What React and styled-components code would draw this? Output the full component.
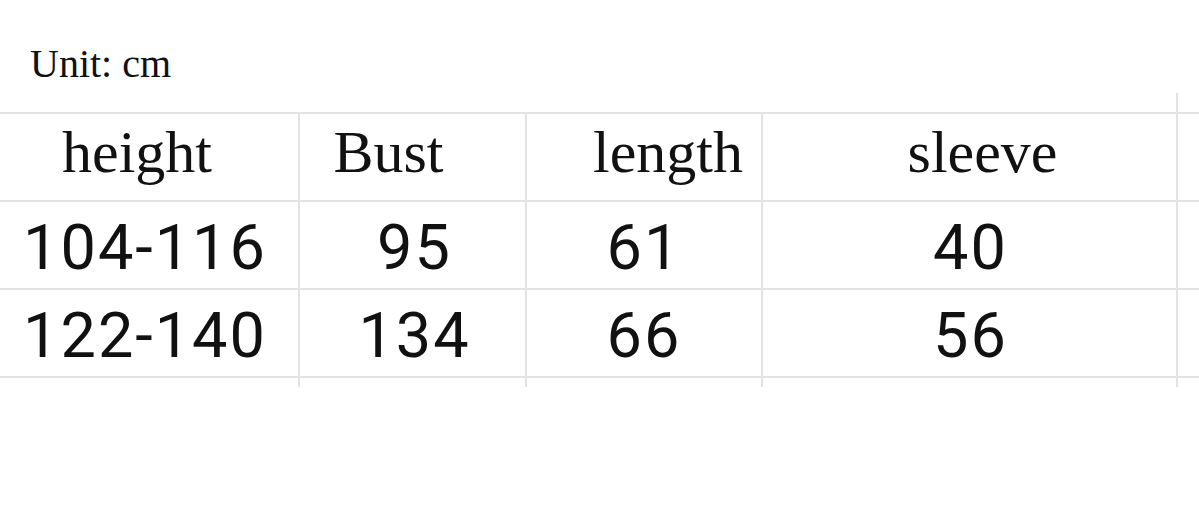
import React from 'react';
import styled, { createGlobalStyle } from 'styled-components';

const GlobalStyle = createGlobalStyle`
  html, body {
    margin: 0;
    padding: 0;
    background: #ffffff;
  }
`;

const LINE = '#e1e3e5';

const Page = styled.div`
  width: 1199px;
  height: 505px;
  overflow: hidden;
  background: #ffffff;
  color: #111111;
`;

const Caption = styled.div`
  box-sizing: border-box;
  height: 93px;
  padding: 41px 0 0 30px;
  font-family: "Liberation Serif", "Times New Roman", serif;
  font-size: 40px;
  line-height: 46px;
`;

const Row = styled.div`
  display: grid;
  grid-template-columns: 300px 227px 236px 415px 1fr;
  ${(p) => p.$top && `border-top: 2px solid ${LINE};`}
`;

const Cell = styled.div`
  box-sizing: content-box;
  height: ${(p) => p.$h || 86}px;
  display: flex;
  align-items: center;
  justify-content: center;
  border-right: ${(p) => (p.$noRight ? 'none' : `2px solid ${LINE}`)};
  border-bottom: ${(p) => (p.$noBottom ? 'none' : `2px solid ${LINE}`)};
  &:last-child {
    border-right: none;
  }
`;

const Head = styled.span`
  font-family: "Liberation Serif", "Times New Roman", serif;
  font-size: 60px;
  line-height: 60px;
  transform: translate(${(p) => p.$dx || 0}px, -5px);
  white-space: nowrap;
`;

const Num = styled.span`
  font-family: Roboto, "Noto Sans", sans-serif;
  font-weight: 400;
  font-size: 63px;
  line-height: 63px;
  letter-spacing: 2px;
  transform: translate(${(p) => p.$dx || 0}px, 2px);
  white-space: nowrap;
`;

const headers = [
  { label: 'height', dx: -12 },
  { label: 'Bust', dx: -24 },
  { label: 'length', dx: 24 },
  { label: 'sleeve', dx: 13 },
];

const rows = [
  ['104-116', '95', '61', '40'],
  ['122-140', '134', '66', '56'],
];

const numShift = [-4, 2, 0, 1];

const App = () => (
  <Page>
    <GlobalStyle />
    <Caption>Unit: cm</Caption>

    <Row>
      <Cell $h={19} $noBottom $noRight />
      <Cell $h={19} $noBottom $noRight />
      <Cell $h={19} $noBottom $noRight />
      <Cell $h={19} $noBottom />
      <Cell $h={19} $noBottom />
    </Row>

    <Row $top>
      {headers.map((h) => (
        <Cell key={h.label}>
          <Head $dx={h.dx}>{h.label}</Head>
        </Cell>
      ))}
      <Cell />
    </Row>

    {rows.map((r) => (
      <Row key={r[0]}>
        {r.map((v, i) => (
          <Cell key={i}>
            <Num $dx={numShift[i]}>{v}</Num>
          </Cell>
        ))}
        <Cell />
      </Row>
    ))}

    <Row>
      <Cell $h={9} $noBottom />
      <Cell $h={9} $noBottom />
      <Cell $h={9} $noBottom />
      <Cell $h={9} $noBottom />
      <Cell $h={9} $noBottom />
    </Row>
  </Page>
);

export default App;
